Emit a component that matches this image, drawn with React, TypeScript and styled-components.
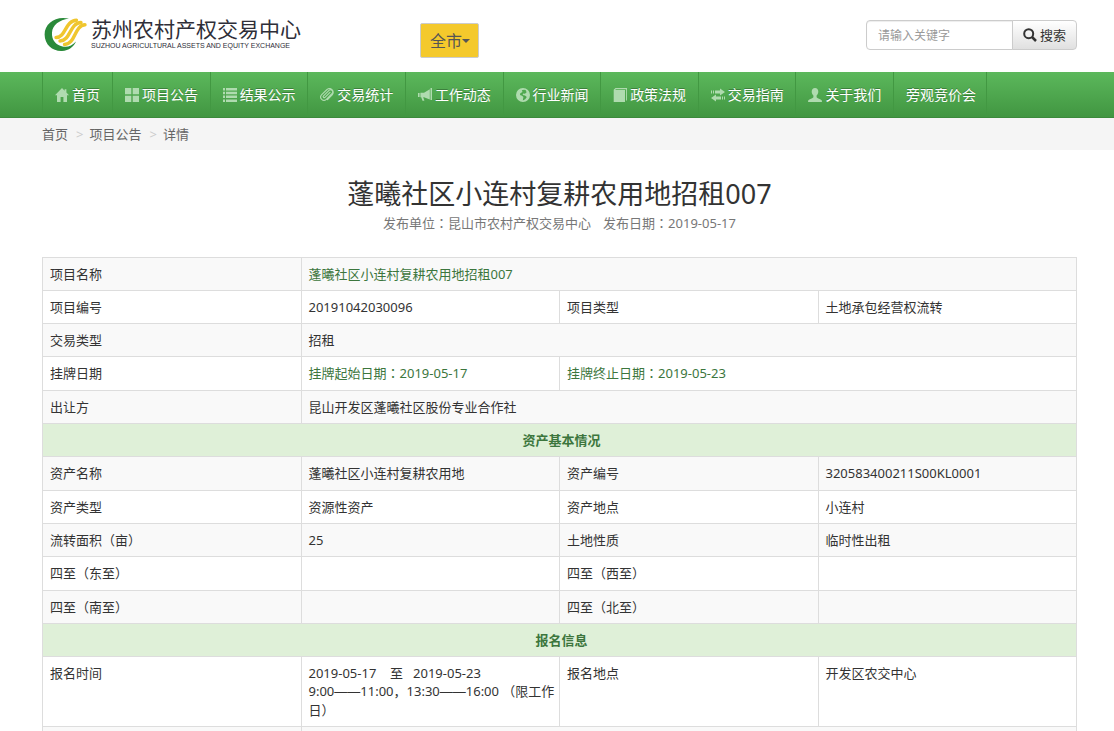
import React from 'react';
import styled, { createGlobalStyle, css } from 'styled-components';

const GlobalStyle = createGlobalStyle`
  *, *::before, *::after { box-sizing: border-box; }
  body {
    margin: 0;
    background: #fff;
    color: #333;
    font-family: 'Noto Sans', 'Noto Sans CJK SC', sans-serif;
    font-size: 13px;
    line-height: 18px;
  }
  button, input, select { font: inherit; color: inherit; margin: 0; }
  a { color: inherit; text-decoration: none; }
`;

const container = css`
  padding: 0 37px 0 42px;
`;

const Header = styled.header`
  ${container}
  display: flex;
  align-items: flex-start;
  height: 72px;
`;

const Logo = styled.a`
  display: flex;
  align-items: flex-start;
  gap: 4px;
  width: 378px;
  padding: 15px 0 0 2px;
`;

const LogoText = styled.span`
  display: flex;
  flex-direction: column;
  color: #2e2e38;
  white-space: nowrap;
`;

const LogoName = styled.span`
  font: 400 21px/26px 'Noto Sans CJK SC', sans-serif;
`;

const LogoEnglish = styled.span`
  font: 7px/10px 'Liberation Sans', sans-serif;
`;

const CityPicker = styled.label`
  position: relative;
  display: flex;
  align-items: center;
  margin-top: 23px;
`;

const CitySelect = styled.select`
  appearance: none;
  width: 59px;
  height: 35px;
  padding: 0 0 0 9px;
  border: 1px solid #ccc;
  border-radius: 2px;
  background: #f4c92c;
  color: #555;
  font-size: 16px;
  cursor: pointer;
`;

const Caret = styled.svg`
  position: absolute;
  right: 9px;
  pointer-events: none;
`;

const Search = styled.form`
  display: flex;
  margin: 20px 0 0 auto;
`;

const SearchInput = styled.input`
  width: 147px;
  height: 30px;
  padding: 0 11px;
  border: 1px solid #ccc;
  border-radius: 4px 0 0 4px;
  background: #fff;
  font-size: 12px;
  box-shadow: inset 0 1px 1px rgba(0, 0, 0, 0.075);
  &::placeholder { color: #999; opacity: 1; }
`;

const SearchButton = styled.button`
  display: flex;
  align-items: center;
  gap: 3px;
  height: 30px;
  margin-left: -1px;
  padding: 0 10px;
  border: 1px solid #ccc;
  border-radius: 0 4px 4px 0;
  background: linear-gradient(#fff, #e0e0e0);
  white-space: nowrap;
  cursor: pointer;
`;

const NavBar = styled.nav`
  ${container}
  height: 46px;
  border-bottom: 1px solid #3b8a3b;
  background: linear-gradient(#5cb85c, #419641);
`;

const NavList = styled.ul`
  display: grid;
  grid-template-columns: 70px repeat(8, minmax(0, 1fr)) 94px;
  max-width: 945px;
  height: 100%;
  margin: 0;
  padding: 0;
  list-style: none;
`;

const NavItem = styled.li`
  border-left: 1px solid #429842;
  &:last-child { border-right: 1px solid #429842; }
`;

const NavLink = styled.a`
  display: flex;
  align-items: center;
  gap: 3px;
  height: 100%;
  padding-left: 12px;
  color: #fff;
  font-size: 14px;
  white-space: nowrap;
  text-shadow: 0 -1px 0 rgba(0, 0, 0, 0.25);
`;

const NavIcon = styled.svg`
  flex: none;
  width: 14px;
  height: 14px;
  fill: #afdbaf;
`;

const Breadcrumb = styled.nav`
  ${container}
  display: flex;
  align-items: center;
  height: 32px;
  background: #f5f5f5;
  color: #666;
`;

const Crumb = styled.span`
  & + &::before {
    content: '>';
    padding: 0 6px 0 8px;
    color: #ccc;
  }
`;

const Main = styled.main`
  ${container}
  padding-top: 26px;
`;

const Title = styled.h1`
  margin: 0;
  font-size: 27px;
  font-weight: 400;
  line-height: 36px;
  text-align: center;
`;

const Meta = styled.p`
  display: flex;
  justify-content: center;
  gap: 12px;
  margin: 2px 0 25px;
  color: #777;
`;

/* Full-width colon centred in its cell */
const Colon = styled.span`
  font-family: 'Noto Sans CJK TC', sans-serif;
`;

/* Em dashes that join into one unbroken line */
const Dash = styled.span`
  font-family: 'Liberation Sans', sans-serif;
`;

const Table = styled.table`
  width: 100%;
  border-collapse: collapse;
  table-layout: fixed;
`;

const Row = styled.tr<{ $tone: 'plain' | 'striped' | 'section' }>`
  height: 33px;
  background: ${({ $tone }) =>
    $tone === 'section' ? '#dff0d8' : $tone === 'striped' ? '#f9f9f9' : '#fff'};
  &:nth-child(3n + 4) { height: 34px; }
`;

const cell = css`
  padding: 7px 3px 7px 7px;
  border: 1px solid #ddd;
  text-align: left;
  vertical-align: top;
  font-weight: 400;
`;

const Label = styled.th`
  ${cell}
`;

const Value = styled.td<{ $green?: boolean }>`
  ${cell}
  color: ${({ $green }) => ($green ? '#3c763d' : 'inherit')};
`;

const SectionTitle = styled.th`
  ${cell}
  color: #3c763d;
  font-weight: 700;
  text-align: center;
`;

const icons: Record<string, React.ReactNode> = {
  home: <path d="M7 0 0 7.2h2V14h3.6V9h2.8v5H12V7.2h2L11.4 4.500V1.200H9.600V2.700Z" />,
  grid: <path d="M0 0h6.300v6.300H0zM7.700 0H14v6.300H7.700zM0 7.700h6.300V14H0zM7.700 7.700H14V14H7.700z" />,
  list: (
    <path d="M0 0h2v2.500H0zM3 0h11v2.500H3zM0 3.800h2v2.500H0zM3 3.800h11v2.500H3zM0 7.600h2v2.500H0zM3 7.600h11v2.500H3zM0 11.400h2v2.500H0zM3 11.400h11v2.500H3z" />
  ),
  clip: (
    <path
      d="M10 4.300 5 9.300a1 1 0 0 1-1.500-1.500L9 2.300a2.200 2.200 0 0 1 3.100 3.100L6.300 11.300a3.200 3.200 0 0 1-4.600-4.600L7 1.500C8.500.300 10.500.200 12 1.600c1.500 1.400 1.700 3.600.2 5.200L7.500 11.600"
      fill="none"
      stroke="#afdbaf"
      strokeWidth="1.100"
      strokeLinecap="round"
    />
  ),
  horn: (
    <path d="M12.500 0H14v12h-1.500zM11.800 1.300v10.300L6 9.200H5.200L6.400 12.800H4.500L3.200 9.200H2.400V4.800H6zM0 5h1.600v4H0z" />
  ),
  globe: (
    <path
      fillRule="evenodd"
      d="M7 0a7 7 0 1 1 0 14A7 7 0 0 1 7 0ZM8 1.700 5.800 2.300 6.500 4 4.300 5.200 4 7l2 .8L7.400 9l-.6 3.400 2.400-1.100 1.600-2.400L9 7.600 6.600 7 7.200 5.600 9 5.800 10.600 4.200 9.600 2Z"
    />
  ),
  book: <path d="M2.500 0H14v12.500h-.900V1.200H3L2.200 2H12V14H.700V1.800Z" />,
  transfer: <path d="M0 2.500h1v3H0zM2 2.500h1v3H2zM4 2.500h5V.500L14 4 9 7.500v-2H4zM14 8.500h-1v3h1zM12 8.500h-1v3h1zM10 8.500H5v-2L0 10l5 3.500v-2h5z" />,
  user: (
    <path d="M7 0C4.900 0 3.700 1.500 3.700 3.600c0 1.800.7 3 1.700 3.900v1.700c-.4.900-4.200 1.900-5.100 3L0 14h14l-.3-1.800c-.9-1.100-4.700-2.100-5.100-3V7.500c1-.9 1.700-2.100 1.700-3.900C10.300 1.500 9.100 0 7 0Z" />
  ),
};

const navItems: { text: string; icon?: string }[] = [
  { text: '首页', icon: 'home' },
  { text: '项目公告', icon: 'grid' },
  { text: '结果公示', icon: 'list' },
  { text: '交易统计', icon: 'clip' },
  { text: '工作动态', icon: 'horn' },
  { text: '行业新闻', icon: 'globe' },
  { text: '政策法规', icon: 'book' },
  { text: '交易指南', icon: 'transfer' },
  { text: '关于我们', icon: 'user' },
  { text: '旁观竞价会' },
];

type Cell = { content: React.ReactNode; span?: number; green?: boolean };
type RowData =
  | { section: string }
  | { label: string; cells: Cell[]; label2?: string; striped: boolean };

const name = '蓬曦社区小连村复耕农用地招租007';

const wide = (striped: boolean, label: string, content: string, green = false): RowData => ({
  striped,
  label,
  cells: [{ content, span: 3, green }],
});

const pair = (striped: boolean, label: string, a: string, label2: string, b: string): RowData => ({
  striped,
  label,
  label2,
  cells: [{ content: a }, { content: b }],
});

const rows: RowData[] = [
  wide(true, '项目名称', name, true),
  pair(false, '项目编号', '20191042030096', '项目类型', '土地承包经营权流转'),
  wide(true, '交易类型', '招租'),
  {
    striped: false,
    label: '挂牌日期',
    cells: [
      { content: <>挂牌起始日期<Colon>：</Colon>2019-05-17</>, green: true },
      { content: <>挂牌终止日期<Colon>：</Colon>2019-05-23</>, span: 2, green: true },
    ],
  },
  wide(true, '出让方', '昆山开发区蓬曦社区股份专业合作社'),
  { section: '资产基本情况' },
  pair(true, '资产名称', '蓬曦社区小连村复耕农用地', '资产编号', '320583400211S00KL0001'),
  pair(false, '资产类型', '资源性资产', '资产地点', '小连村'),
  pair(true, '流转面积（亩）', '25', '土地性质', '临时性出租'),
  pair(false, '四至（东至）', '', '四至（西至）', ''),
  pair(true, '四至（南至）', '', '四至（北至）', ''),
  { section: '报名信息' },
  {
    striped: false,
    label: '报名时间',
    label2: '报名地点',
    cells: [
      {
        content: (
          <>
            2019-05-17{'\u00a0\u00a0\u00a0 '}至{'\u00a0\u00a0 '}2019-05-23
            <br />
            9:00<Dash>——</Dash>11:00，13:30<Dash>——</Dash>16:00 （限工作日）
          </>
        ),
      },
      { content: '开发区农交中心' },
    ],
  },
  wide(true, '', ''),
];

function DetailRow({ row }: { row: RowData }) {
  if ('section' in row) {
    return (
      <Row $tone="section">
        <SectionTitle colSpan={4}>{row.section}</SectionTitle>
      </Row>
    );
  }
  const [first, second] = row.cells;
  return (
    <Row $tone={row.striped ? 'striped' : 'plain'}>
      <Label scope="row">{row.label}</Label>
      <Value colSpan={first.span} $green={first.green}>{first.content}</Value>
      {row.label2 && <Label scope="row">{row.label2}</Label>}
      {second && <Value colSpan={second.span} $green={second.green}>{second.content}</Value>}
    </Row>
  );
}

export default function App() {
  return (
    <>
      <GlobalStyle />
      <Header>
        <Logo href="#">
          <svg width="43" height="38" viewBox="0 0 43 38" aria-hidden="true">
            <path
              d="M25 3.600C12 .500.600 8 .600 19.500.600 30 9 36.500 18 36c7-.4 12-4.500 14-9.500C28 31 23.500 32.500 18.500 31.500 12 30.200 7.500 25 8 17.500 8.500 10.500 15 5 25 3.600Z"
              fill="#2a8a3a"
            />
            <g fill="none" stroke="#f0c62e" strokeLinecap="round">
              <path d="M12 22.500c10 0 9-17 20.500-17.300" strokeWidth="3.400" />
              <path d="M16 26c11-.5 9.500-18 21-18.500" strokeWidth="3.400" />
              <path d="M20.500 29.500c11.500-.5 9.500-19 20.500-19.700" strokeWidth="3.400" />
            </g>
          </svg>
          <LogoText>
            <LogoName>苏州农村产权交易中心</LogoName>
            <LogoEnglish>SUZHOU AGRICULTURAL ASSETS AND EQUITY EXCHANGE</LogoEnglish>
          </LogoText>
        </Logo>
        <CityPicker>
          <CitySelect aria-label="地区" defaultValue="全市">
            <option>全市</option>
          </CitySelect>
          <Caret width="8" height="4" viewBox="0 0 8 4" aria-hidden="true">
            <path d="M0 0h8L4 4Z" fill="#555" />
          </Caret>
        </CityPicker>
        <Search onSubmit={(e) => e.preventDefault()}>
          <SearchInput type="text" placeholder="请输入关键字" aria-label="关键字" />
          <SearchButton type="submit">
            <svg width="14" height="14" viewBox="0 0 14 14" aria-hidden="true">
              <circle cx="5.700" cy="5.700" r="4.500" fill="none" stroke="#333" strokeWidth="2" />
              <path d="m9 9 4 4" stroke="#333" strokeWidth="2.500" />
            </svg>
            搜索
          </SearchButton>
        </Search>
      </Header>

      <NavBar>
        <NavList>
          {navItems.map(({ text, icon }) => (
            <NavItem key={text}>
              <NavLink href="#">
                {icon && <NavIcon viewBox="0 0 14 14" aria-hidden="true">{icons[icon]}</NavIcon>}
                {text}
              </NavLink>
            </NavItem>
          ))}
        </NavList>
      </NavBar>

      <Breadcrumb aria-label="当前位置">
        <Crumb><a href="#">首页</a></Crumb>
        <Crumb><a href="#">项目公告</a></Crumb>
        <Crumb>详情</Crumb>
      </Breadcrumb>

      <Main>
        <Title>{name}</Title>
        <Meta>
          <span>发布单位<Colon>：</Colon>昆山市农村产权交易中心</span>
          <span>发布日期<Colon>：</Colon>2019-05-17</span>
        </Meta>
        <Table>
          <tbody>
            {rows.map((row, i) => (
              <DetailRow key={i} row={row} />
            ))}
          </tbody>
        </Table>
      </Main>
    </>
  );
}
